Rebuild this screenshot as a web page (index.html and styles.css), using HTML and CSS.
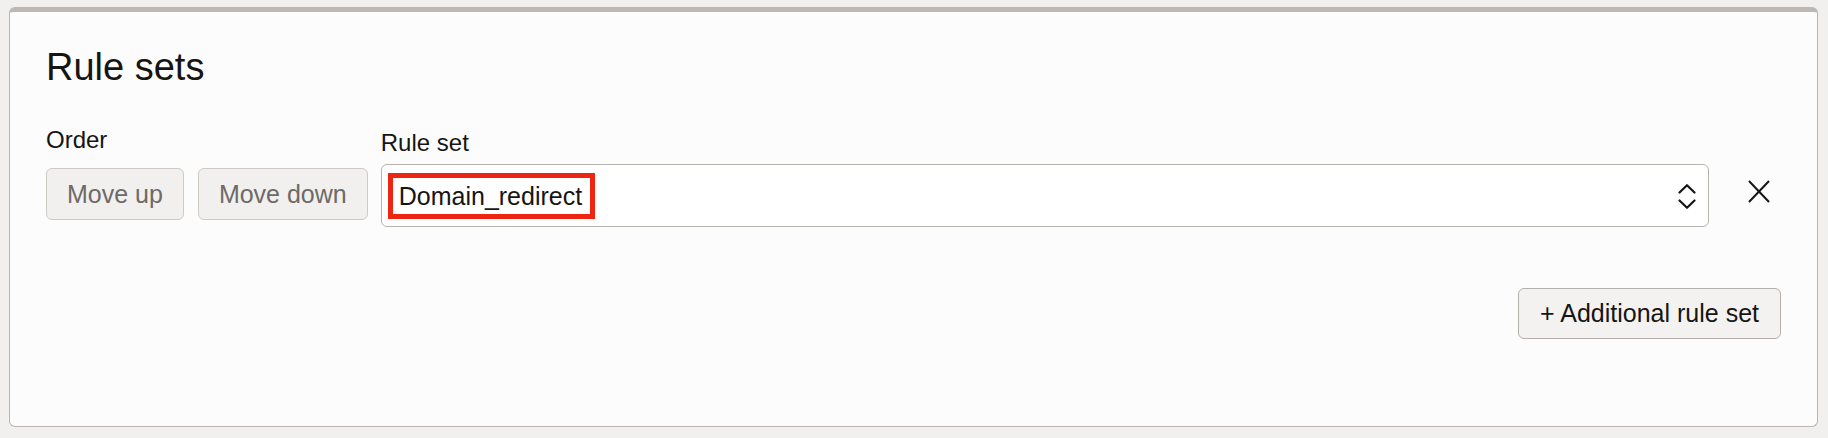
FILE: index.html
```html
<!DOCTYPE html>
<html lang="en">
<head>
<meta charset="utf-8">
<title>Rule sets</title>
<link rel="stylesheet" href="styles.css">
</head>
<body>
<section class="card">
  <h2 class="title">Rule sets</h2>
  <div class="row">
    <div class="col order">
      <div class="label">Order</div>
      <div class="btns">
        <button class="btn disabled" type="button">Move up</button>
        <button class="btn disabled" type="button">Move down</button>
      </div>
    </div>
    <div class="col ruleset">
      <div class="label label-rs">Rule set</div>
      <div class="select">
        <span class="value">Domain_redirect</span>
        <svg class="chev" width="18" height="26" viewBox="0 0 18 26" aria-hidden="true">
          <polyline points="1.5,9.5 9,2.2 16.5,9.5" fill="none" stroke="#161513" stroke-width="2.2" stroke-linecap="round" stroke-linejoin="round"/>
          <polyline points="1.5,17.5 9,24.8 16.5,17.5" fill="none" stroke="#161513" stroke-width="2.2" stroke-linecap="round" stroke-linejoin="round"/>
        </svg>
      </div>
    </div>
    <button class="close" type="button" aria-label="Remove">
      <svg width="22" height="23" viewBox="0 0 22 23" aria-hidden="true">
        <line x1="1" y1="1" x2="21" y2="22" stroke="#161513" stroke-width="2"/>
        <line x1="21" y1="1" x2="1" y2="22" stroke="#161513" stroke-width="2"/>
      </svg>
    </button>
  </div>
  <div class="footer">
    <button class="btn add" type="button">+ Additional rule set</button>
  </div>
</section>
</body>
</html>
```

FILE: styles.css
```css
* { box-sizing: border-box; }

html, body {
  margin: 0;
  padding: 0;
  background: #f1f0ee;
}

body {
  font-family: "Liberation Sans", Arial, Helvetica, sans-serif;
  color: #161513;
  padding-top: 7px;
}

.card {
  margin: 0 10px 0 9px;
  height: 420px;
  background: #fcfcfc;
  border: 1px solid #b9b5b1;
  border-top: 5px solid #beb8b4;
  border-radius: 6px;
  padding: 33px 36px 0 36px;
}

.title {
  margin: 0;
  font-size: 38px;
  line-height: 44px;
  font-weight: 400;
  color: #161513;
}

.row {
  display: flex;
  align-items: flex-start;
  margin-top: 37px;
}

.col {
  display: flex;
  flex-direction: column;
}

.order {
  margin-right: 13px;
}

.ruleset {
  flex: 1;
}

.label {
  font-size: 24px;
  line-height: 28px;
  color: #161513;
}

.label-rs {
  margin-top: 3px;
}

.btns {
  display: flex;
  gap: 14px;
  margin-top: 14px;
}

.btn {
  font-family: "Liberation Sans", Arial, Helvetica, sans-serif;
  font-size: 25px;
  line-height: 50px;
  height: 52px;
  padding: 0 20px;
  border-radius: 6px;
  cursor: pointer;
  white-space: nowrap;
}

.btn.disabled {
  background: #f1f0ee;
  border: 1px solid #cdcac6;
  color: #6d6a67;
}

.select {
  margin-top: 7px;
  height: 63px;
  background: #ffffff;
  border: 1px solid #b7b4b0;
  border-radius: 6px;
  display: flex;
  align-items: center;
  padding: 0 12px 0 6px;
}

.value {
  display: inline-block;
  border: 5px solid #ee2510;
  padding: 0 8px 0 6px;
  font-size: 25px;
  line-height: 36px;
  color: #161513;
}

.chev {
  margin-left: auto;
  display: block;
}

.close {
  margin-left: 28px;
  margin-top: 43px;
  width: 44px;
  height: 44px;
  padding: 0;
  border: 0;
  background: transparent;
  display: flex;
  align-items: center;
  justify-content: center;
  cursor: pointer;
}

.close svg {
  display: block;
}

.footer {
  display: flex;
  justify-content: flex-end;
  margin-top: 61px;
}

.btn.add {
  height: 51px;
  line-height: 49px;
  padding: 0 21px;
  background: #f3f2f0;
  border: 1px solid #b4b1ad;
  color: #161513;
}
```
